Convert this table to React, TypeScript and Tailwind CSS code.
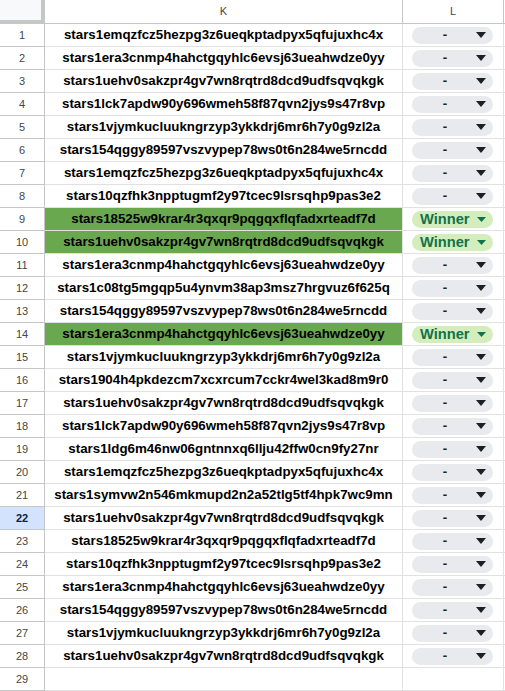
const rows: { addr: string; win?: boolean }[] = [
  { addr: "stars1emqzfcz5hezpg3z6ueqkptadpyx5qfujuxhc4x" },
  { addr: "stars1era3cnmp4hahctgqyhlc6evsj63ueahwdze0yy" },
  { addr: "stars1uehv0sakzpr4gv7wn8rqtrd8dcd9udfsqvqkgk" },
  { addr: "stars1lck7apdw90y696wmeh58f87qvn2jys9s47r8vp" },
  { addr: "stars1vjymkucluukngrzyp3ykkdrj6mr6h7y0g9zl2a" },
  { addr: "stars154qggy89597vszvypep78ws0t6n284we5rncdd" },
  { addr: "stars1emqzfcz5hezpg3z6ueqkptadpyx5qfujuxhc4x" },
  { addr: "stars10qzfhk3npptugmf2y97tcec9lsrsqhp9pas3e2" },
  { addr: "stars18525w9krar4r3qxqr9pqgqxflqfadxrteadf7d", win: true },
  { addr: "stars1uehv0sakzpr4gv7wn8rqtrd8dcd9udfsqvqkgk", win: true },
  { addr: "stars1era3cnmp4hahctgqyhlc6evsj63ueahwdze0yy" },
  { addr: "stars1c08tg5mgqp5u4ynvm38ap3msz7hrgvuz6f625q" },
  { addr: "stars154qggy89597vszvypep78ws0t6n284we5rncdd" },
  { addr: "stars1era3cnmp4hahctgqyhlc6evsj63ueahwdze0yy", win: true },
  { addr: "stars1vjymkucluukngrzyp3ykkdrj6mr6h7y0g9zl2a" },
  { addr: "stars1904h4pkdezcm7xcxrcum7cckr4wel3kad8m9r0" },
  { addr: "stars1uehv0sakzpr4gv7wn8rqtrd8dcd9udfsqvqkgk" },
  { addr: "stars1lck7apdw90y696wmeh58f87qvn2jys9s47r8vp" },
  { addr: "stars1ldg6m46nw06gntnnxq6llju42ffw0cn9fy27nr" },
  { addr: "stars1emqzfcz5hezpg3z6ueqkptadpyx5qfujuxhc4x" },
  { addr: "stars1symvw2n546mkmupd2n2a52tlg5tf4hpk7wc9mn" },
  { addr: "stars1uehv0sakzpr4gv7wn8rqtrd8dcd9udfsqvqkgk" },
  { addr: "stars18525w9krar4r3qxqr9pqgqxflqfadxrteadf7d" },
  { addr: "stars10qzfhk3npptugmf2y97tcec9lsrsqhp9pas3e2" },
  { addr: "stars1era3cnmp4hahctgqyhlc6evsj63ueahwdze0yy" },
  { addr: "stars154qggy89597vszvypep78ws0t6n284we5rncdd" },
  { addr: "stars1vjymkucluukngrzyp3ykkdrj6mr6h7y0g9zl2a" },
  { addr: "stars1uehv0sakzpr4gv7wn8rqtrd8dcd9udfsqvqkgk" },
];

const Caret = ({ win }: { win?: boolean }) =>
  win ? (
    <svg width="9" height="5" viewBox="0 0 9 5" className="shrink-0">
      <path d="M0 0h9L4.5 5z" fill="#11734b" />
    </svg>
  ) : (
    <svg width="10" height="6" viewBox="0 0 10 6" className="shrink-0">
      <path d="M0 0h10L5 6z" fill="#1f1f1f" />
    </svg>
  );

const Chip = ({ win }: { win?: boolean }) => (
  <div
    className={`ml-[9px] flex h-[17px] w-[81px] items-center rounded-full pl-2 pr-[7px] ${
      win ? "bg-[#d4edbc] text-[#11734b]" : "bg-[#e8eaed] text-[#1f1f1f]"
    }`}
  >
    {win ? (
      <span className="flex-1 text-left text-[14.67px] font-bold leading-none">Winner</span>
    ) : (
      <span className="flex-1 pr-[6px] text-center text-[13.33px] font-bold leading-none">-</span>
    )}
    <Caret win={win} />
  </div>
);

export default function App() {
  return (
    <div
      className="h-[691px] w-[505px] overflow-hidden bg-white"
      style={{ fontFamily: '"Liberation Sans", Arial, sans-serif' }}
    >
      {/* column headers */}
      <div className="grid h-6 grid-cols-[45px_358px_101px_1fr]">
        <div className="border-r-4 border-b-4 border-[#c4c7c5] bg-[#f8f9fa]" />
        <div className="flex items-center justify-center border-r border-b border-[#c4c7c5] text-[11px] text-[#444746]">
          K
        </div>
        <div className="flex items-center justify-center border-r border-b border-[#c4c7c5] text-[11px] text-[#444746]">
          L
        </div>
        <div className="border-b border-[#c4c7c5]" />
      </div>

      {rows.map((r, i) => {
        const n = i + 1;
        const active = n === 22;
        return (
          <div key={n} className="grid h-[23px] grid-cols-[45px_358px_101px_1fr]">
            <div
              className={`flex items-center justify-center border-r border-b border-[#c4c7c5] text-[11px] ${
                active ? "bg-[#d3e3fd] font-bold text-[#0b1f4a]" : "text-[#444746]"
              }`}
            >
              {n}
            </div>
            <div
              className={`flex items-center justify-center border-r border-b border-[#e1e1e1] text-[13.33px] font-bold text-black ${
                r.win ? "bg-[#6aa84f]" : ""
              }`}
            >
              {r.addr}
            </div>
            <div className="flex items-center border-r border-b border-[#e1e1e1]">
              <Chip win={r.win} />
            </div>
            <div className="border-b border-[#e1e1e1]" />
          </div>
        );
      })}

      <div className="grid h-[23px] grid-cols-[45px_358px_101px_1fr]">
        <div className="flex items-center justify-center border-r border-b border-[#c4c7c5] text-[11px] text-[#444746]">
          29
        </div>
        <div className="border-r border-b border-[#e1e1e1]" />
        <div className="border-r border-b border-[#e1e1e1]" />
        <div className="border-b border-[#e1e1e1]" />
      </div>
    </div>
  );
}
